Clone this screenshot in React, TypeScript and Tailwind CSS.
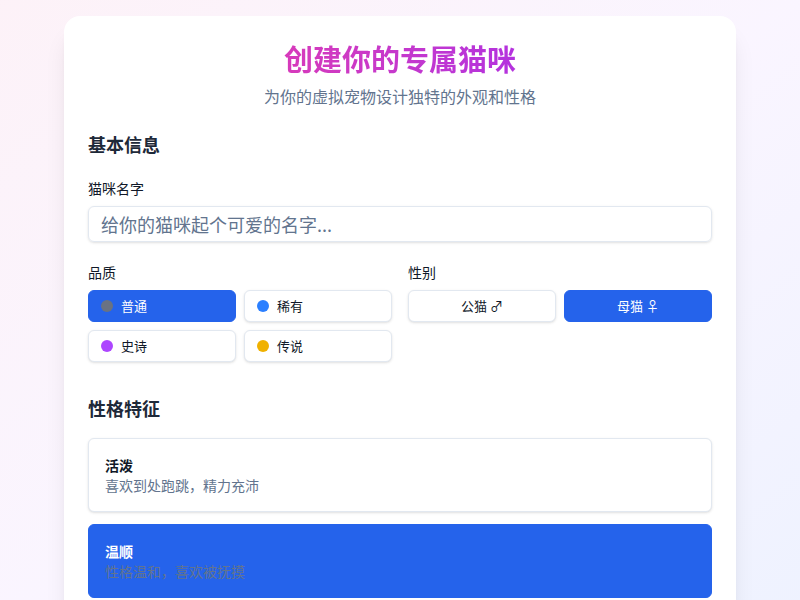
import React, { useState } from 'react';

type Rarity = { key: string; label: string; dot: string };

const rarities: Rarity[] = [
  { key: 'common', label: '普通', dot: 'bg-gray-500' },
  { key: 'rare', label: '稀有', dot: 'bg-blue-500' },
  { key: 'epic', label: '史诗', dot: 'bg-purple-500' },
  { key: 'legendary', label: '传说', dot: 'bg-yellow-500' },
];

const traits = [
  { key: 'playful', name: '活泼', desc: '喜欢到处跑跳，精力充沛' },
  { key: 'gentle', name: '温顺', desc: '性格温和，喜欢被抚摸' },
];

export default function App() {
  const [rarity, setRarity] = useState('common');
  const [gender, setGender] = useState<'male' | 'female'>('female');
  const [trait, setTrait] = useState('gentle');
  const [name, setName] = useState('');

  const active = 'bg-[#2563eb] border-[#2563eb] text-white';
  const idle = 'bg-white border-slate-200 text-gray-900 shadow-sm';

  return (
    <div
      className="min-h-screen bg-gradient-to-br from-pink-50 via-purple-50 to-indigo-50 pt-4 px-4"
      style={{ fontFamily: '"Noto Sans CJK SC", "Noto Sans", sans-serif' }}
    >
      <div className="max-w-2xl mx-auto bg-white rounded-2xl shadow-xl p-6">
        {/* 标题 */}
        <div className="text-center mb-[22px]">
          <h1 className="text-[29px] leading-9 font-bold bg-gradient-to-r from-pink-500 to-purple-600 bg-clip-text text-transparent mb-2">
            创建你的专属猫咪
          </h1>
          <p className="text-slate-500">为你的虚拟宠物设计独特的外观和性格</p>
        </div>

        {/* 基本信息 */}
        <div className="mb-8">
          <h2 className="text-lg font-semibold text-gray-800 mb-5">基本信息</h2>

          <div className="mb-5">
            <label className="block text-sm text-gray-900 mb-2">猫咪名字</label>
            <input
              value={name}
              onChange={(e) => setName(e.target.value)}
              placeholder="给你的猫咪起个可爱的名字..."
              className="w-full h-9 px-3 text-lg border border-slate-200 rounded-md shadow-sm placeholder:text-slate-500 outline-none"
            />
          </div>

          <div className="grid grid-cols-2 gap-4">
            <div>
              <label className="block text-sm text-gray-900 mb-2">品质</label>
              <div className="grid grid-cols-2 gap-2">
                {rarities.map((r) => (
                  <button
                    key={r.key}
                    onClick={() => setRarity(r.key)}
                    className={`flex items-center gap-2 h-8 px-3 text-[13px] rounded-md border ${
                      rarity === r.key ? active : idle
                    }`}
                  >
                    <span className={`w-3 h-3 rounded-full ${r.dot}`} />
                    {r.label}
                  </button>
                ))}
              </div>
            </div>

            <div>
              <label className="block text-sm text-gray-900 mb-2">性别</label>
              <div className="grid grid-cols-2 gap-2">
                <button
                  onClick={() => setGender('male')}
                  className={`h-8 text-[13px] rounded-md border ${gender === 'male' ? active : idle}`}
                >
                  公猫 ♂
                </button>
                <button
                  onClick={() => setGender('female')}
                  className={`h-8 text-[13px] rounded-md border ${gender === 'female' ? active : idle}`}
                >
                  母猫 ♀
                </button>
              </div>
            </div>
          </div>
        </div>

        {/* 性格特征 */}
        <div>
          <h2 className="text-lg font-semibold text-gray-800 mb-4">性格特征</h2>
          <div className="space-y-3">
            {traits.map((t) => (
              <button
                key={t.key}
                onClick={() => setTrait(t.key)}
                className={`w-full text-left px-4 py-4 rounded-md border ${
                  trait === t.key ? 'bg-[#2563eb] border-[#2563eb]' : 'bg-white border-slate-200 shadow-sm'
                }`}
              >
                <div className={`text-sm font-semibold ${trait === t.key ? 'text-white' : 'text-gray-900'}`}>
                  {t.name}
                </div>
                <div className="text-sm text-slate-500">{t.desc}</div>
              </button>
            ))}
          </div>
        </div>
      </div>
    </div>
  );
}
